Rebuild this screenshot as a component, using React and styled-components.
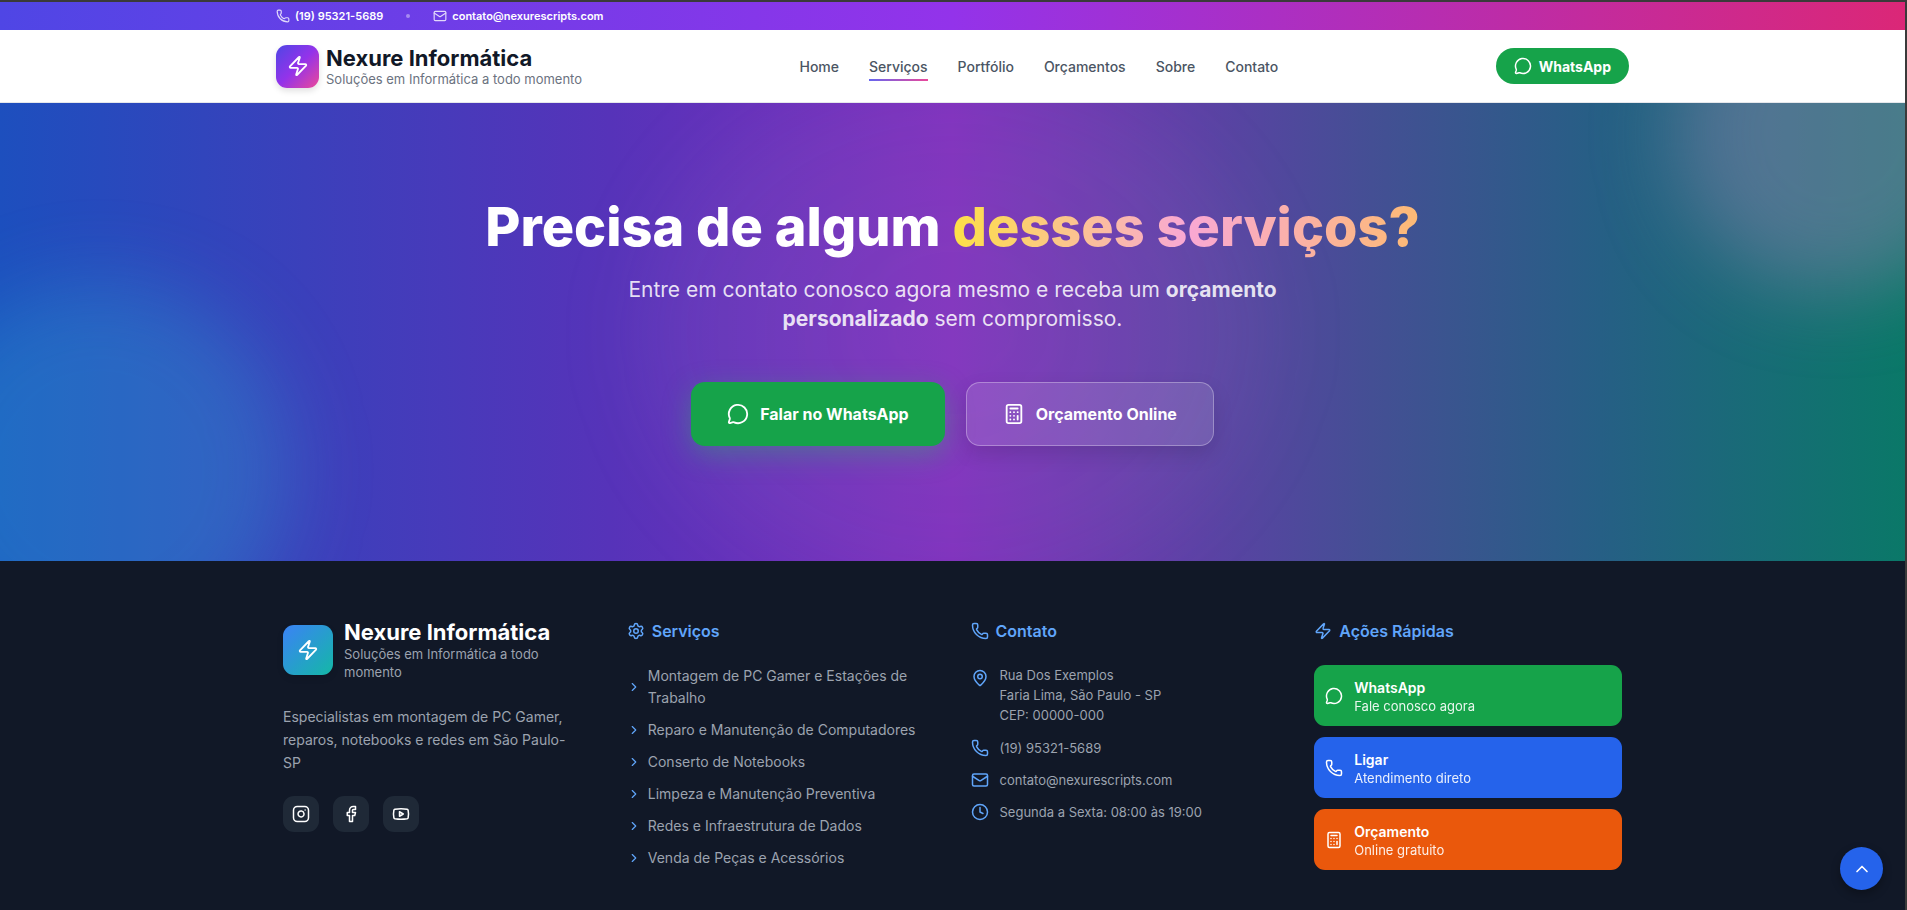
import React from 'react';
import styled, { createGlobalStyle } from 'styled-components';
import {
  Calculator,
  ChevronRight,
  ChevronUp,
  Clock,
  Facebook,
  Instagram,
  Mail,
  MapPin,
  MessageCircle,
  Phone,
  Settings,
  Youtube,
  Zap,
} from 'lucide-react';

const colors = {
  frame: '#3a3a3a',
  ink: '#111827',
  slate: '#4b5563',
  muted: '#6b7280',
  soft: '#9ca3af',
  green: '#16a34a',
  blue: '#2563eb',
  orange: '#ea580c',
  sky: '#60a5fa',
};

const GlobalStyle = createGlobalStyle`
  *, *::before, *::after {
    box-sizing: border-box;
  }
  body {
    margin: 0;
    background: ${colors.ink};
    font-family: Inter, 'Liberation Sans', sans-serif;
    font-size: 14px;
  }
  h1, h2, h3, p, ul, address {
    margin: 0;
    padding: 0;
    font-style: normal;
  }
  ul {
    list-style: none;
  }
  a {
    color: inherit;
    text-decoration: none;
  }
  svg {
    flex-shrink: 0;
  }
`;

const Page = styled.div`
  min-height: 100vh;
  border-top: 2px solid ${colors.frame};
  border-right: 2px solid ${colors.frame};
`;

const Container = styled.div`
  width: 100%;
  max-width: ${({ $width }) => $width || 1353}px;
  margin: 0 auto;
`;

const TopBar = styled.div`
  background: linear-gradient(90deg, #4f46e5, #9333ea 50%, #db2777);
  color: #fff;
`;

const TopBarRow = styled(Container)`
  display: flex;
  align-items: center;
  gap: 23px;
  height: 28px;
  font-size: 11px;
  font-weight: 600;
`;

const TopBarLink = styled.a`
  display: flex;
  align-items: center;
  gap: 5px;

  svg {
    opacity: 0.8;
  }
`;

const Dot = styled.span`
  width: 4px;
  height: 4px;
  border-radius: 50%;
  background: rgba(255, 255, 255, 0.4);
`;

const Header = styled.header`
  background: #fff;
  border-bottom: 1px solid #e5e7eb;
`;

const HeaderRow = styled(Container)`
  display: flex;
  align-items: center;
  justify-content: space-between;
  height: 72px;
`;

const Brand = styled.a`
  display: flex;
  align-items: center;
  gap: 7px;
`;

const BrandMark = styled.span`
  display: flex;
  align-items: center;
  justify-content: center;
  flex-shrink: 0;
  width: 43px;
  height: 43px;
  border-radius: 11px;
  background: linear-gradient(135deg, #4f46e5, #9333ea 50%, #ec4899);
  box-shadow: 0 3px 6px rgba(0, 0, 0, 0.12);
  color: #fff;
`;

const BrandName = styled.div`
  color: ${colors.ink};
  font-size: 22px;
  font-weight: 700;
  line-height: 26px;
`;

const BrandTagline = styled.div`
  color: ${colors.muted};
  font-size: 13px;
  line-height: 16px;
`;

const Nav = styled.nav`
  display: flex;
  gap: 30px;
`;

const NavLink = styled.a`
  padding: 6px 0 2px;
  border-bottom: 2px solid transparent;
  border-image: ${({ $active }) => ($active ? 'linear-gradient(90deg, #6366f1, #ec4899) 1' : 'none')};
  color: ${colors.slate};
  font-weight: 500;
  line-height: 20px;
`;

const HeaderButton = styled.a`
  display: flex;
  align-items: center;
  gap: 7px;
  height: 36px;
  padding: 0 18px;
  border-radius: 18px;
  background: ${colors.green};
  color: #fff;
  font-weight: 700;
`;

const Hero = styled.section`
  position: relative;
  overflow: hidden;
  padding: 90px 16px 115px;
  background: linear-gradient(
    90deg,
    #1d4fbe,
    #3b40bb 16%,
    #5633b9 32%,
    #7e2dbe 50%,
    #444f94 72%,
    #265f85 84%,
    #0a7868
  );
  text-align: center;
`;

const Glow = styled.span`
  position: absolute;
  border-radius: 50%;
  filter: blur(40px);
`;

const PinkGlow = styled(Glow)`
  top: -130px;
  right: -90px;
  width: 320px;
  height: 320px;
  background: rgba(168, 130, 190, 0.4);
`;

const CyanGlow = styled(Glow)`
  bottom: -100px;
  left: -90px;
  width: 380px;
  height: 380px;
  background: rgba(45, 195, 215, 0.25);
`;

const CenterGlow = styled(Glow)`
  top: -40px;
  left: calc(50% - 320px);
  width: 640px;
  height: 540px;
  background: radial-gradient(closest-side, rgba(190, 180, 200, 0.1), rgba(190, 180, 200, 0.06));
`;

const HeroContent = styled.div`
  position: relative;
  display: flex;
  flex-direction: column;
  align-items: center;
`;

const HeroTitle = styled.h1`
  color: #fff;
  font-size: 54px;
  font-weight: 800;
  line-height: 68px;
`;

const Highlight = styled.span`
  background: linear-gradient(90deg, #fde047, #f9a8d4 50%, #fdba74);
  background-clip: text;
  color: transparent;
`;

const HeroText = styled.p`
  max-width: 690px;
  margin-top: 14px;
  color: rgba(255, 255, 255, 0.85);
  font-size: 21px;
  line-height: 29px;

  strong {
    font-weight: 700;
  }
`;

const HeroActions = styled.div`
  display: flex;
  justify-content: center;
  gap: 21px;
  margin-top: 49px;
`;

const HeroButton = styled.a`
  display: flex;
  align-items: center;
  gap: 11px;
  height: 64px;
  padding: 0 36px;
  border-radius: 14px;
  background: ${colors.green};
  box-shadow: 0 8px 28px rgba(34, 197, 94, 0.35);
  color: #fff;
  font-size: 16px;
  font-weight: 700;
`;

const GlassButton = styled(HeroButton)`
  border: 1px solid rgba(255, 255, 255, 0.3);
  background: rgba(255, 255, 255, 0.12);
  box-shadow: 0 8px 20px rgba(0, 0, 0, 0.12);
`;

const Footer = styled.footer`
  background: ${colors.ink};
  color: ${colors.soft};
`;

const FooterGrid = styled(Container)`
  display: grid;
  grid-template-columns: repeat(4, 1fr);
  gap: 36px;
  padding: 58px 0 39px;
`;

const FooterBrand = styled.div`
  display: flex;
  align-items: center;
  gap: 11px;
`;

const FooterMark = styled(BrandMark)`
  width: 50px;
  height: 50px;
  background: linear-gradient(135deg, #3b82f6, #14b8a6);
`;

const FooterName = styled(BrandName)`
  color: #fff;
`;

const FooterTagline = styled(BrandTagline)`
  color: ${colors.soft};
  line-height: 18px;
`;

const FooterText = styled.p`
  max-width: 290px;
  margin-top: 24px;
  font-size: 14px;
  line-height: 23px;
`;

const Socials = styled.div`
  display: flex;
  gap: 14px;
  margin-top: 22px;
`;

const SocialLink = styled.a`
  display: flex;
  align-items: center;
  justify-content: center;
  width: 36px;
  height: 36px;
  border-radius: 11px;
  background: #1f2937;
  color: #fff;
`;

const FooterTitle = styled.h3`
  display: flex;
  align-items: center;
  gap: 7px;
  margin-bottom: 22px;
  color: ${colors.sky};
  font-size: 16px;
  font-weight: 600;
  line-height: 24px;
`;

const ServiceList = styled.ul`
  display: flex;
  flex-direction: column;
  gap: 10px;
`;

const ServiceLink = styled.a`
  display: flex;
  align-items: center;
  gap: 7px;
  font-size: 14px;
  line-height: 22px;

  svg {
    color: ${colors.sky};
  }
`;

const ContactList = styled.address`
  display: flex;
  flex-direction: column;
  gap: 14px;
  font-size: 13px;
`;

const ContactItem = styled.div`
  display: flex;
  gap: 11px;
  line-height: ${({ $tall }) => ($tall ? 20 : 18)}px;

  svg {
    margin-top: ${({ $tall }) => ($tall ? 4 : 0)}px;
    color: ${colors.sky};
  }
`;

const QuickActions = styled.div`
  display: flex;
  flex-direction: column;
  gap: 11px;
`;

const QuickAction = styled.a`
  display: flex;
  align-items: center;
  gap: 11px;
  height: 61px;
  padding: 0 11px;
  border-radius: 11px;
  background: ${({ $color }) => $color};
  color: #fff;
`;

const QuickTitle = styled.div`
  font-size: 14px;
  font-weight: 600;
  line-height: 20px;
`;

const QuickText = styled.div`
  font-size: 13px;
  line-height: 16px;
  opacity: 0.9;
`;

const ScrollTop = styled.button`
  position: fixed;
  right: 24px;
  bottom: 20px;
  display: flex;
  align-items: center;
  justify-content: center;
  width: 43px;
  height: 43px;
  padding: 0;
  border: none;
  border-radius: 50%;
  background: ${colors.blue};
  box-shadow: 0 4px 10px rgba(0, 0, 0, 0.3);
  color: #fff;
  cursor: pointer;
`;

const navItems = ['Home', 'Serviços', 'Portfólio', 'Orçamentos', 'Sobre', 'Contato'];

const services = [
  'Montagem de PC Gamer e Estações de Trabalho',
  'Reparo e Manutenção de Computadores',
  'Conserto de Notebooks',
  'Limpeza e Manutenção Preventiva',
  'Redes e Infraestrutura de Dados',
  'Venda de Peças e Acessórios',
];

const socials = [
  { label: 'Instagram', Icon: Instagram },
  { label: 'Facebook', Icon: Facebook },
  { label: 'YouTube', Icon: Youtube },
];

const quickActions = [
  { title: 'WhatsApp', text: 'Fale conosco agora', color: colors.green, Icon: MessageCircle },
  { title: 'Ligar', text: 'Atendimento direto', color: colors.blue, Icon: Phone },
  { title: 'Orçamento', text: 'Online gratuito', color: colors.orange, Icon: Calculator },
];

function SiteHeader() {
  return (
    <>
      <TopBar>
        <TopBarRow>
          <TopBarLink href="tel:+5519953215689">
            <Phone size={14} />
            (19) 95321-5689
          </TopBarLink>
          <Dot />
          <TopBarLink href="mailto:contato@nexurescripts.com">
            <Mail size={14} />
            contato@nexurescripts.com
          </TopBarLink>
        </TopBarRow>
      </TopBar>
      <Header>
        <HeaderRow>
          <Brand href="#">
            <BrandMark>
              <Zap size={22} />
            </BrandMark>
            <div>
              <BrandName>Nexure Informática</BrandName>
              <BrandTagline>Soluções em Informática a todo momento</BrandTagline>
            </div>
          </Brand>
          <Nav>
            {navItems.map(item => (
              <NavLink key={item} href="#" $active={item === 'Serviços'}>
                {item}
              </NavLink>
            ))}
          </Nav>
          <HeaderButton href="#">
            <MessageCircle size={18} />
            WhatsApp
          </HeaderButton>
        </HeaderRow>
      </Header>
    </>
  );
}

function CallToAction() {
  return (
    <Hero>
      <PinkGlow />
      <CyanGlow />
      <CenterGlow />
      <HeroContent>
        <HeroTitle>
          Precisa de algum <Highlight>desses serviços?</Highlight>
        </HeroTitle>
        <HeroText>
          Entre em contato conosco agora mesmo e receba um <strong>orçamento personalizado</strong> sem
          compromisso.
        </HeroText>
        <HeroActions>
          <HeroButton href="#">
            <MessageCircle size={22} />
            Falar no WhatsApp
          </HeroButton>
          <GlassButton href="#">
            <Calculator size={22} />
            Orçamento Online
          </GlassButton>
        </HeroActions>
      </HeroContent>
    </Hero>
  );
}

function SiteFooter() {
  return (
    <Footer>
      <FooterGrid $width={1339}>
        <div>
          <FooterBrand>
            <FooterMark>
              <Zap size={22} />
            </FooterMark>
            <div>
              <FooterName>Nexure Informática</FooterName>
              <FooterTagline>Soluções em Informática a todo momento</FooterTagline>
            </div>
          </FooterBrand>
          <FooterText>
            Especialistas em montagem de PC Gamer, reparos, notebooks e redes em São Paulo-SP
          </FooterText>
          <Socials>
            {socials.map(({ label, Icon }) => (
              <SocialLink key={label} href="#" aria-label={label}>
                <Icon size={18} />
              </SocialLink>
            ))}
          </Socials>
        </div>

        <div>
          <FooterTitle>
            <Settings size={18} />
            Serviços
          </FooterTitle>
          <ServiceList>
            {services.map(service => (
              <li key={service}>
                <ServiceLink href="#">
                  <ChevronRight size={14} />
                  {service}
                </ServiceLink>
              </li>
            ))}
          </ServiceList>
        </div>

        <div>
          <FooterTitle>
            <Phone size={18} />
            Contato
          </FooterTitle>
          <ContactList>
            <ContactItem $tall>
              <MapPin size={18} />
              <div>
                Rua Dos Exemplos
                <br />
                Faria Lima, São Paulo - SP
                <br />
                CEP: 00000-000
              </div>
            </ContactItem>
            <ContactItem>
              <Phone size={18} />
              <a href="tel:+5519953215689">(19) 95321-5689</a>
            </ContactItem>
            <ContactItem>
              <Mail size={18} />
              <a href="mailto:contato@nexurescripts.com">contato@nexurescripts.com</a>
            </ContactItem>
            <ContactItem>
              <Clock size={18} />
              <span>Segunda a Sexta: 08:00 às 19:00</span>
            </ContactItem>
          </ContactList>
        </div>

        <div>
          <FooterTitle>
            <Zap size={18} />
            Ações Rápidas
          </FooterTitle>
          <QuickActions>
            {quickActions.map(({ title, text, color, Icon }) => (
              <QuickAction key={title} href="#" $color={color}>
                <Icon size={18} />
                <div>
                  <QuickTitle>{title}</QuickTitle>
                  <QuickText>{text}</QuickText>
                </div>
              </QuickAction>
            ))}
          </QuickActions>
        </div>
      </FooterGrid>
    </Footer>
  );
}

function App() {
  const scrollToTop = () => {
    window.scrollTo({ top: 0, behavior: 'smooth' });
  };

  return (
    <>
      <GlobalStyle />
      <Page>
        <SiteHeader />
        <CallToAction />
        <SiteFooter />
        <ScrollTop type="button" aria-label="Voltar ao topo" onClick={scrollToTop}>
          <ChevronUp size={20} />
        </ScrollTop>
      </Page>
    </>
  );
}

export default App;
